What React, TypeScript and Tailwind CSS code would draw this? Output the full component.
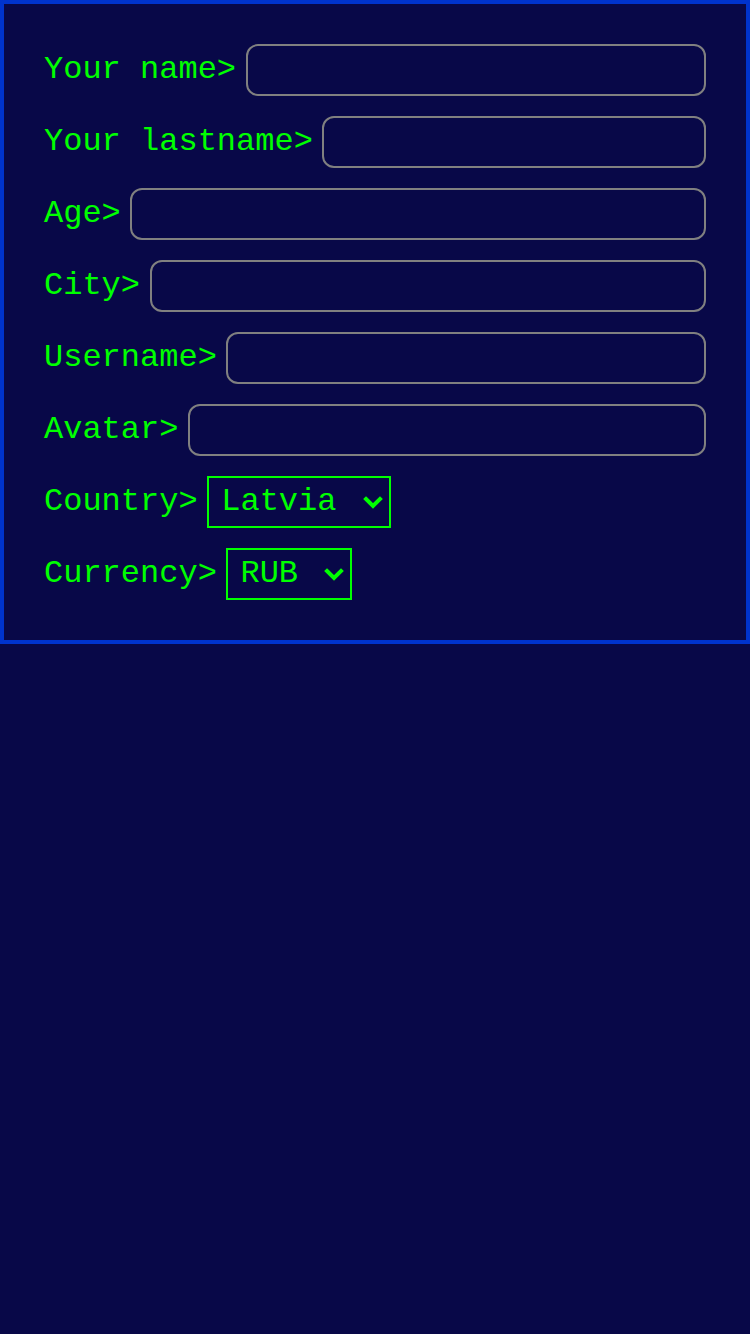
import React from 'react';

const fields = ['Your name', 'Your lastname', 'Age', 'City', 'Username', 'Avatar'];

const Chevron = () => (
  <svg
    className="pointer-events-none absolute right-[8px] top-1/2 -translate-y-1/2"
    width="20"
    height="14"
    viewBox="0 0 20 14"
    fill="none"
  >
    <path d="M3 4 L10 11 L17 4" stroke="#00ff00" strokeWidth="4" strokeLinecap="square" />
  </svg>
);

const Picker = ({ value, options, width }: { value: string; options: string[]; width: string }) => (
  <div className="relative ml-[9.6px]">
    <select
      defaultValue={value}
      className={`h-[52px] appearance-none border-2 border-[#00ff00] bg-transparent pl-[12px] pr-[40px] text-[32px] text-[#00ff00] outline-none ${width}`}
      style={{ fontFamily: '"Liberation Mono", monospace' }}
    >
      {options.map((o) => (
        <option key={o} value={o} className="bg-[#080848]">
          {o}
        </option>
      ))}
    </select>
    <Chevron />
  </div>
);

const App = () => {
  return (
    <div
      className="min-h-[1334px] bg-[#080848] text-[#00ff00]"
      style={{ fontFamily: '"Liberation Mono", monospace' }}
    >
      <form className="flex flex-col gap-[20px] border-4 border-[#0033cc] p-[40px]">
        {fields.map((f) => (
          <label key={f} className="flex h-[52px] items-center">
            <span className="whitespace-pre text-[32px] leading-none">{f}&gt;</span>
            <input
              type="text"
              className="ml-[9.6px] h-[52px] min-w-0 flex-1 rounded-[12px] border-2 border-[#808080] bg-transparent px-3 text-[32px] text-[#00ff00] outline-none"
            />
          </label>
        ))}
        <div className="flex h-[52px] items-center">
          <span className="text-[32px] leading-none">Country&gt;</span>
          <Picker value="Latvia" options={['Latvia', 'Russia', 'Estonia']} width="w-[184px]" />
        </div>
        <div className="flex h-[52px] items-center">
          <span className="text-[32px] leading-none">Currency&gt;</span>
          <Picker value="RUB" options={['RUB', 'EUR', 'USD']} width="w-[126px]" />
        </div>
      </form>
    </div>
  );
};

export default App;
